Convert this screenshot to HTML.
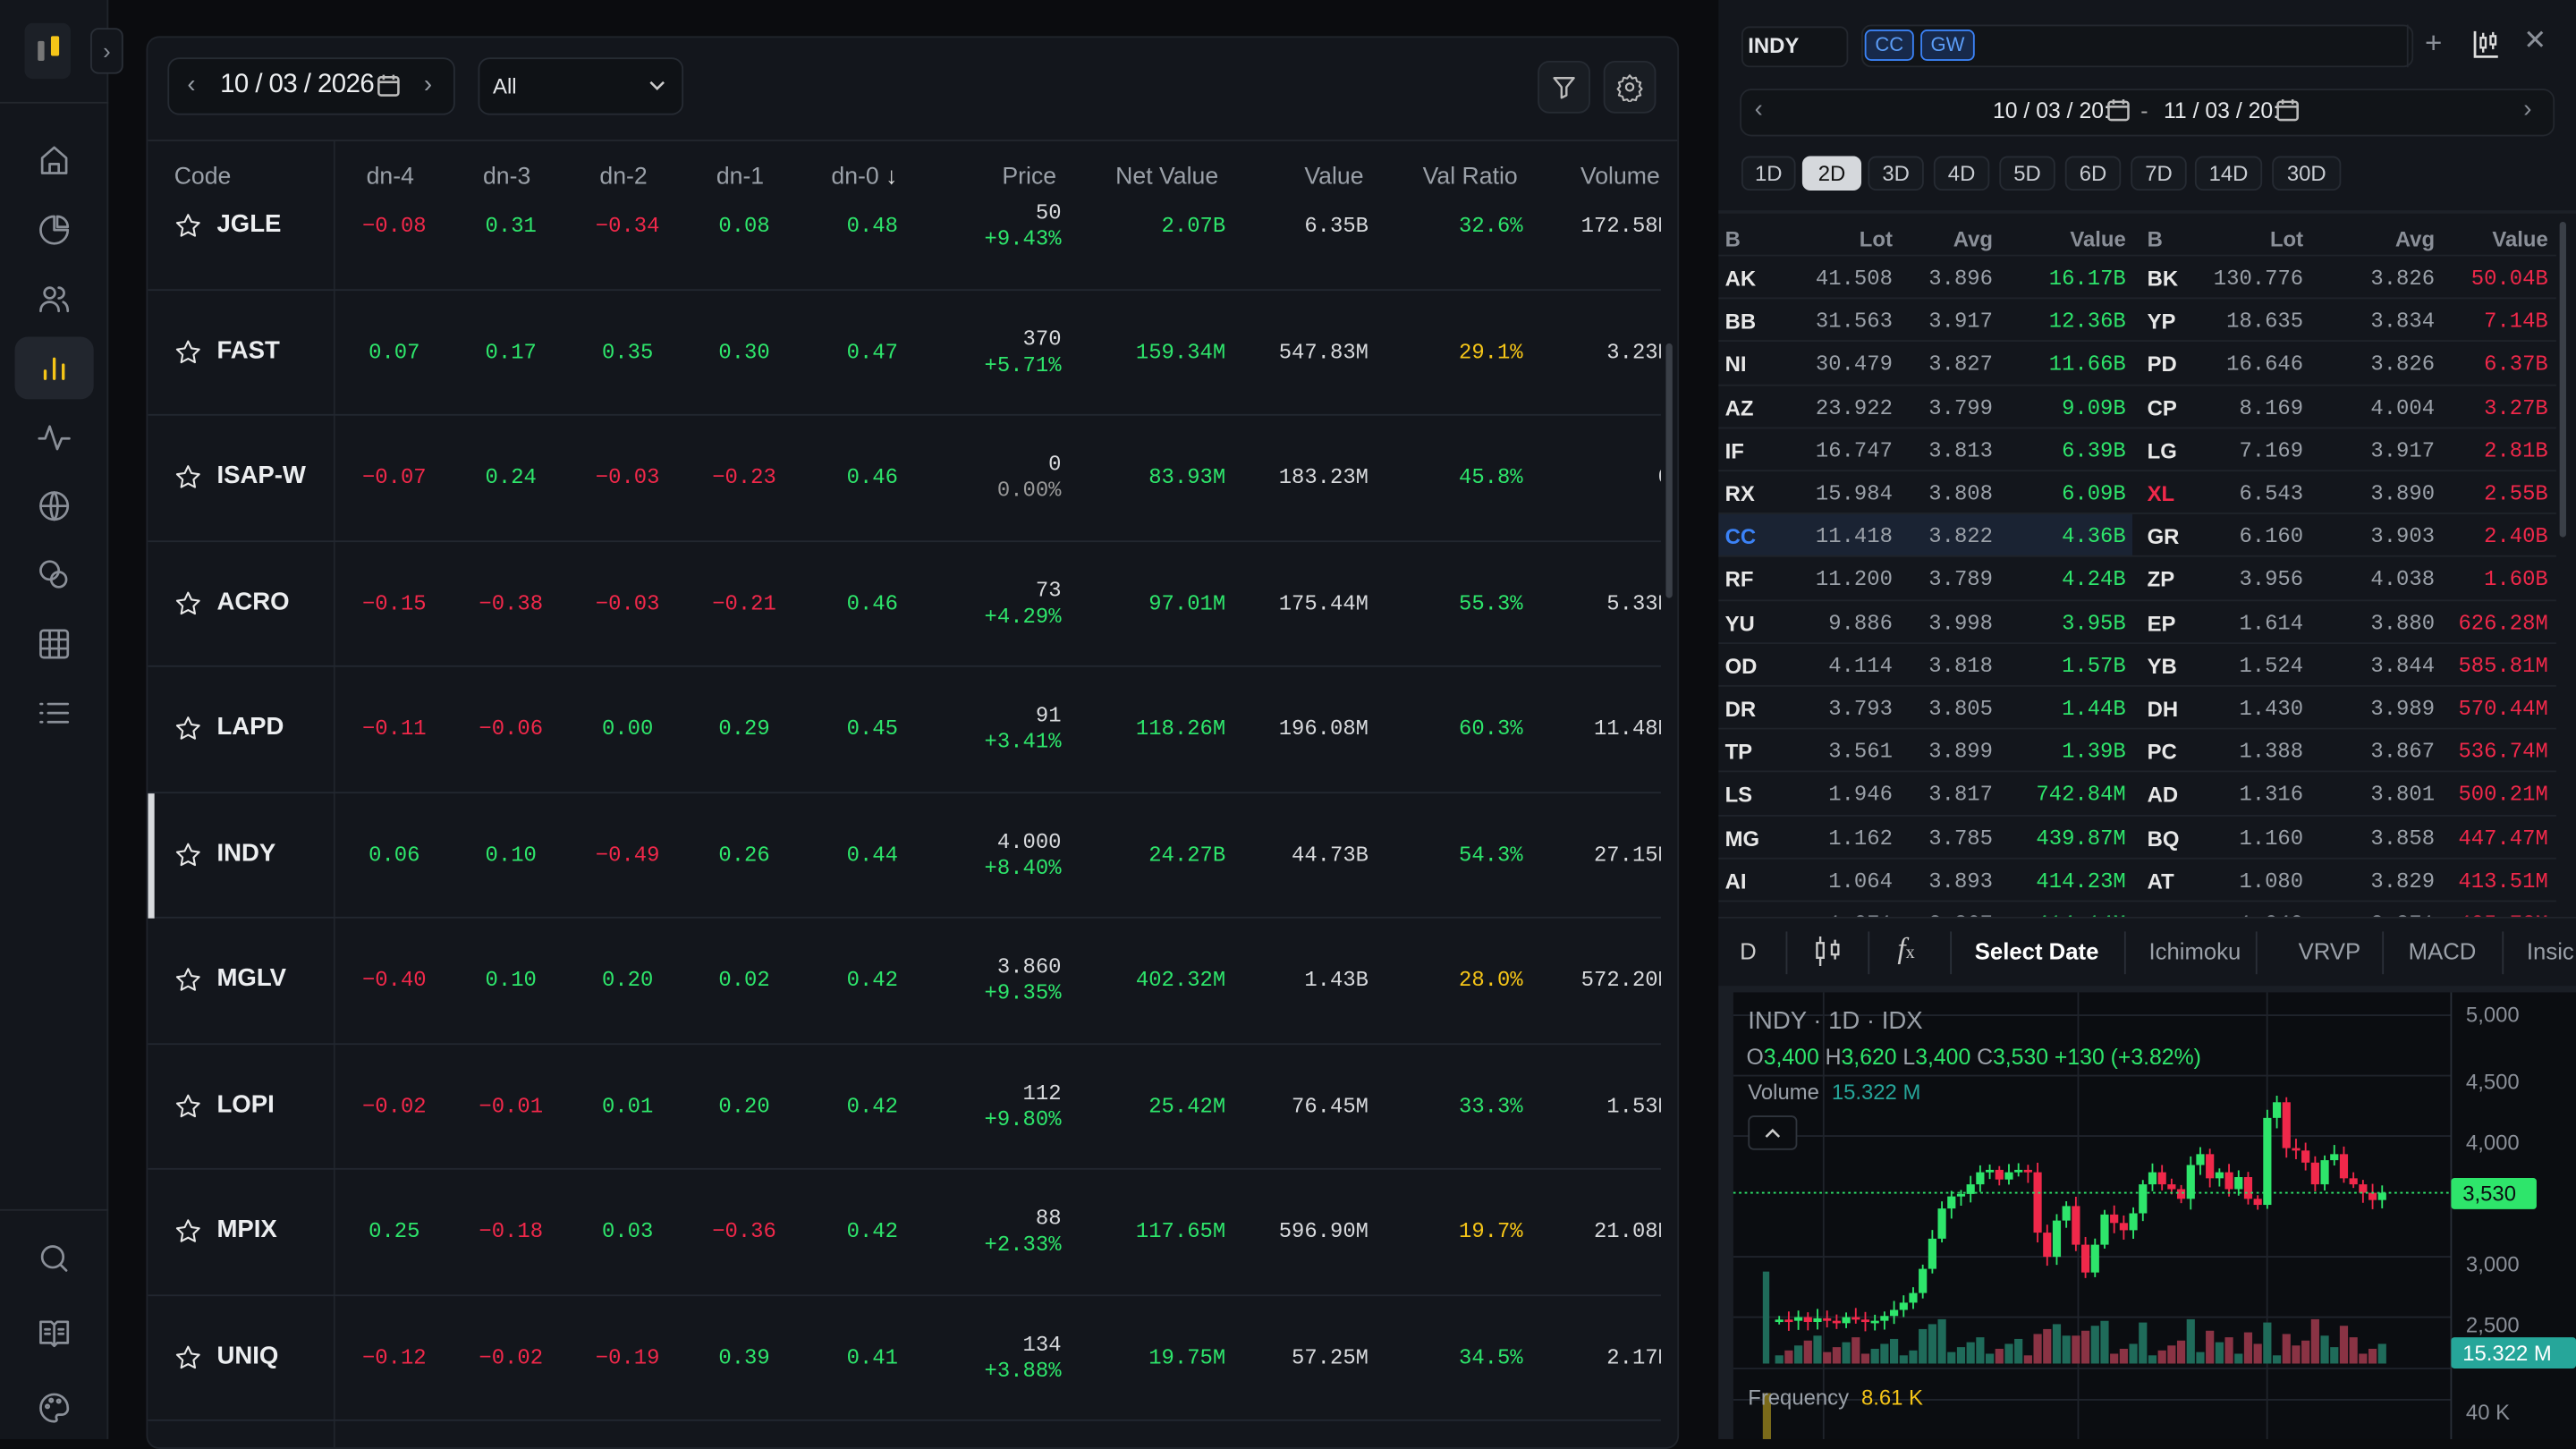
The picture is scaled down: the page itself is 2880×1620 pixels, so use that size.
<!DOCTYPE html>
<html><head><meta charset="utf-8"><style>
*{box-sizing:border-box;margin:0;padding:0}
html,body{width:2880px;height:1608px;overflow:hidden;background:#0b0c0f}
#w{position:absolute;left:0;top:0;width:1568px;height:876px;transform:scale(1.836735);transform-origin:0 0;font-family:"Liberation Sans",sans-serif;color:#e6e8eb}
.a{position:absolute}
.mono{font-family:"Liberation Mono","DejaVu Sans Mono",monospace}
.g{color:#2ee56b}.r{color:#f0284a}.y{color:#f5c518}.w{color:#d8dadd}
.ic{position:absolute;left:22px;width:22px;height:22px}
.ic svg{width:22px;height:22px;fill:none;stroke:#8a8f98;stroke-width:1.6;stroke-linecap:round;stroke-linejoin:round}
.hd{position:absolute;top:99px;font-size:14.5px;color:#9aa0a8}
.row{position:absolute;left:0;width:933px;height:76.5px;border-bottom:1.5px solid #222730}
.row .c{position:absolute;top:30px;font-size:13px;text-align:right}
.row .nm{position:absolute;left:42px;top:28px;font-weight:bold;font-size:15px;color:#eceef0}
.row svg{position:absolute;left:16px;top:29px;width:17px;height:17px;fill:none;stroke:#e8e8e8;stroke-width:1.6;stroke-linejoin:round}
.pb{position:absolute;top:95px;height:21px;border:1px solid #262b33;border-radius:5px;background:#161a20;font-size:13px;color:#c8ccd2;text-align:center;line-height:19px}
.bt{position:absolute;left:0;width:520px;height:26.2px;font-size:13px}
.bt span{position:absolute;top:6px}
.tb{position:absolute;top:571px;font-size:14px;color:#9aa0a8}
.sep{position:absolute;top:567px;width:1px;height:26px;background:#2a2f38}
</style></head><body><div id="w">
<!-- sidebar -->
<div class="a" style="left:0;top:0;width:66px;height:876px;background:#13161c;border-right:1px solid #20242b"></div>
<div class="a" style="left:0;top:62px;width:66px;height:1px;background:#23272e"></div>
<div class="a" style="left:0;top:736px;width:66px;height:1px;background:#23272e"></div>
<div class="a" style="left:15px;top:14px;width:28px;height:34px;background:#1c2027;border-radius:5px"></div>
<div class="a" style="left:23px;top:25px;width:4px;height:12px;background:#777;border-radius:1px"></div>
<div class="a" style="left:31px;top:22px;width:5px;height:12px;background:#f5c518;border-radius:1px"></div>
<div class="a" style="left:55px;top:17px;width:20px;height:28px;border:1px solid #2a2f37;border-radius:5px;background:#13161c;color:#8a8f98;font-size:14px;text-align:center;line-height:26px">›</div>
<div class="a" style="left:9px;top:205px;width:48px;height:38px;background:#22262e;border-radius:8px"></div>
<div class="ic" style="top:87px"><svg viewBox="0 0 24 24"><path d="M4 10l8-7 8 7v10H4z M9 20v-6h6v6"/></svg></div>
<div class="ic" style="top:129px"><svg viewBox="0 0 24 24"><path d="M12 3a9 9 0 1 0 9 9h-9z M14 3v7h7a7 7 0 0 0-7-7"/></svg></div>
<div class="ic" style="top:171px"><svg viewBox="0 0 24 24"><circle cx="9" cy="8" r="3.5"/><path d="M3 20c0-4 3-6 6-6s6 2 6 6 M15 4.5a3.5 3.5 0 0 1 0 7 M18 14c2 1 3 3 3 6"/></svg></div>
<div class="ic" style="top:213px"><svg viewBox="0 0 24 24" style="stroke:#f5c518;stroke-width:2"><path d="M6 19v-5 M12 19V6 M18 19v-9"/></svg></div>
<div class="ic" style="top:255px"><svg viewBox="0 0 24 24"><path d="M2 13h4l3-8 5 15 3-7h5"/></svg></div>
<div class="ic" style="top:297px"><svg viewBox="0 0 24 24"><circle cx="12" cy="12" r="9"/><path d="M3 12h18 M12 3c3 3 3 15 0 18 M12 3c-3 3-3 15 0 18"/></svg></div>
<div class="ic" style="top:339px"><svg viewBox="0 0 24 24"><circle cx="9" cy="9" r="6"/><circle cx="15" cy="15" r="5"/></svg></div>
<div class="ic" style="top:381px"><svg viewBox="0 0 24 24"><rect x="3" y="3" width="18" height="18" rx="2"/><path d="M3 9h18M3 15h18M9 3v18M15 3v18"/></svg></div>
<div class="ic" style="top:423px"><svg viewBox="0 0 24 24"><path d="M8 6h13M8 12h13M8 18h13M3 6h1M3 12h1M3 18h1"/></svg></div>
<div class="ic" style="top:755px"><svg viewBox="0 0 24 24"><circle cx="11" cy="11" r="7"/><path d="M16 16l4 4"/></svg></div>
<div class="ic" style="top:800px"><svg viewBox="0 0 24 24"><path d="M3 5h7l2 2 2-2h7v14h-7l-2 2-2-2H3z M12 7v14 M6 10h3M6 13h3M15 10h3M15 13h3"/></svg></div>
<div class="ic" style="top:846px"><svg viewBox="0 0 24 24"><path d="M12 3a9 9 0 0 0 0 18c1.5 0 2-1 1.5-2s0-2.5 1.5-2.5h2A4 4 0 0 0 21 12a9 9 0 0 0-9-9z"/><circle cx="7.5" cy="11" r="1"/><circle cx="10" cy="7" r="1"/><circle cx="15" cy="7.5" r="1"/></svg></div>

<!-- main panel -->
<div class="a" style="left:89px;top:22px;width:933px;height:860px;background:#13161c;border:1px solid #20242b;border-radius:8px;overflow:hidden">
 <div class="a" style="left:12px;top:12px;width:175px;height:35px;border:1px solid #262b33;border-radius:7px;background:#0f1216"></div>
 <div class="a" style="left:24px;top:20px;color:#9aa0a8;font-size:15px">‹</div>
 <div class="a" style="left:44px;top:20px;font-size:16px;color:#eceef0;letter-spacing:-0.3px">10 / 03 / 2026</div>
 <svg class="a" style="left:139px;top:21px" width="15" height="16" viewBox="0 0 15 16"><rect x="1.5" y="3" width="12" height="11" rx="1.5" fill="none" stroke="#bbb" stroke-width="1.4"/><path d="M1.5 6h12M4.5 1.5v3M10.5 1.5v3" stroke="#bbb" stroke-width="1.4"/></svg>
 <div class="a" style="left:168px;top:20px;color:#9aa0a8;font-size:15px">›</div>
 <div class="a" style="left:201px;top:12px;width:125px;height:35px;border:1px solid #262b33;border-radius:7px;background:#0f1216"></div>
 <div class="a" style="left:210px;top:22px;font-size:13px">All</div>
 <svg class="a" style="left:305px;top:25px" width="10" height="8"><path d="M1 2l4 4 4-4" fill="none" stroke="#ccc" stroke-width="1.4"/></svg>
 <div class="a" style="left:846px;top:14px;width:32px;height:32px;border:1px solid #262b33;border-radius:7px;background:#191d23"></div>
 <svg class="a" style="left:854px;top:22px" width="16" height="16" viewBox="0 0 16 16"><path d="M2 2.5h12l-4.5 5.5v5l-3 1.5v-6.5z" fill="none" stroke="#bbb" stroke-width="1.3" stroke-linejoin="round"/></svg>
 <div class="a" style="left:886px;top:14px;width:32px;height:32px;border:1px solid #262b33;border-radius:7px;background:#191d23"></div>
 <svg class="a" style="left:893px;top:21px" width="18" height="18" viewBox="0 0 24 24"><circle cx="12" cy="12" r="3" fill="none" stroke="#bbb" stroke-width="1.6"/><path d="M12 2.5l2 2.5 3-.7.8 3 3 1-1 3 2 2.2-2 2.2 1 3-3 1-.8 3-3-.7-2 2.5-2-2.5-3 .7-.8-3-3-1 1-3-2-2.2 2-2.2-1-3 3-1 .8-3 3 .7z" fill="none" stroke="#bbb" stroke-width="1.5" stroke-linejoin="round"/></svg>
 <div class="a" style="left:0;top:62px;width:933px;height:1px;background:#23272e"></div>
 <div class="a" style="left:113px;top:63px;width:1px;height:800px;background:#20242b"></div>
 <div class="hd" style="left:16px;top:77px">Code</div>
 <div class="hd" style="left:133px;top:77px">dn-4</div>
 <div class="hd" style="left:204px;top:77px">dn-3</div>
 <div class="hd" style="left:275px;top:77px">dn-2</div>
 <div class="hd" style="left:346px;top:77px">dn-1</div>
 <div class="hd" style="left:416px;top:77px">dn-0 <span style="color:#ddd">↓</span></div>
 <div class="hd" style="left:520px;top:77px">Price</div>
 <div class="hd" style="left:589px;top:77px">Net Value</div>
 <div class="hd" style="left:704px;top:77px">Value</div>
 <div class="hd" style="left:776px;top:77px">Val Ratio</div>
 <div class="hd" style="left:872px;top:77px">Volume</div>
 <div class="a" style="left:0;top:99px;width:921px;height:770px;overflow:hidden" id="body"></div>
 <div class="a" style="left:924px;top:186px;width:4px;height:155px;background:#3a3f47;border-radius:2px"></div>
</div>

<!-- right panel -->
<div class="a" style="left:1046px;top:0;width:522px;height:876px;background:#13161c"></div>
<div class="a" style="left:1060px;top:16px;width:65px;height:25px;border:1px solid #23272e;border-radius:5px;background:#111418"></div>
<div class="a" style="left:1064px;top:20px;font-weight:bold;font-size:13px">INDY</div>
<div class="a" style="left:1133px;top:15px;width:336px;height:26px;border:1px solid #23272e;border-radius:6px;background:#111418"></div>
<div class="a" style="left:1465px;top:15px;width:1px;height:26px;background:#23272e"></div>
<div class="a" style="left:1135px;top:18px;width:30px;height:19px;border:1.4px solid #3b82f6;border-radius:4px;background:#17294a;color:#5b9cf6;font-size:12px;text-align:center;line-height:17px">CC</div>
<div class="a" style="left:1169px;top:18px;width:33px;height:19px;border:1.4px solid #3b82f6;border-radius:4px;background:#17294a;color:#5b9cf6;font-size:12px;text-align:center;line-height:17px">GW</div>
<div class="a" style="left:1476px;top:16px;color:#8a8f98;font-size:18px">+</div>
<svg class="a" style="left:1505px;top:18px" width="17" height="18" viewBox="0 0 17 18"><path d="M1.5 1v15.5h14" fill="none" stroke="#ddd" stroke-width="1.5"/><rect x="5" y="5" width="3" height="6" fill="none" stroke="#ddd" stroke-width="1.3"/><rect x="11" y="4" width="3" height="5" fill="none" stroke="#ddd" stroke-width="1.3"/><path d="M6.5 2v3M6.5 11v3M12.5 1.5v2.5M12.5 9v3" stroke="#ddd" stroke-width="1.3"/></svg>
<div class="a" style="left:1536px;top:15px;color:#8a8f98;font-size:17px">✕</div>
<div class="a" style="left:1059px;top:54px;width:496px;height:29px;border:1px solid #23272e;border-radius:7px;background:#111418"></div>
<div class="a" style="left:1068px;top:58px;color:#8a8f98;font-size:15px">‹</div>
<div class="a" style="top:58px;color:#8a8f98;font-size:15px;left:1536px">›</div>
<div class="a" style="left:1213px;top:60px;font-size:13.5px">10 / 03 / 20:</div>
<svg class="a" style="left:1282px;top:59px" width="15" height="16" viewBox="0 0 15 16"><rect x="1.5" y="3" width="12" height="11" rx="1.5" fill="none" stroke="#bbb" stroke-width="1.4"/><path d="M1.5 6h12M4.5 1.5v3M10.5 1.5v3" stroke="#bbb" stroke-width="1.4"/></svg>
<div class="a" style="left:1303px;top:60px;font-size:13.5px;color:#aaa">-</div>
<div class="a" style="left:1317px;top:60px;font-size:13.5px">11 / 03 / 20:</div>
<svg class="a" style="left:1385px;top:59px" width="15" height="16" viewBox="0 0 15 16"><rect x="1.5" y="3" width="12" height="11" rx="1.5" fill="none" stroke="#bbb" stroke-width="1.4"/><path d="M1.5 6h12M4.5 1.5v3M10.5 1.5v3" stroke="#bbb" stroke-width="1.4"/></svg>
<div class="pb" style="left:1060px;width:33px">1D</div>
<div class="pb" style="left:1097px;width:36px;background:#d5d8dc;color:#111;border-color:#d5d8dc">2D</div>
<div class="pb" style="left:1137px;width:34px">3D</div>
<div class="pb" style="left:1177px;width:34px">4D</div>
<div class="pb" style="left:1217px;width:34px">5D</div>
<div class="pb" style="left:1257px;width:34px">6D</div>
<div class="pb" style="left:1297px;width:34px">7D</div>
<div class="pb" style="left:1336px;width:41px">14D</div>
<div class="pb" style="left:1383px;width:42px">30D</div>
<div class="a" style="left:1046px;top:128px;width:522px;height:2px;background:#1c2027"></div>
<div class="a" style="left:1046px;top:130px;width:510px;height:428px;overflow:hidden" id="bt">
 <div class="bt" style="top:2px;color:#8a8f98;font-weight:bold"><span style="left:4px">B</span><span style="right:414px">Lot</span><span style="right:353px">Avg</span><span style="right:272px">Value</span><span style="left:261px">B</span><span style="right:164px">Lot</span><span style="right:84px">Avg</span><span style="right:15px">Value</span></div>
</div>
<div class="a" style="left:1558px;top:135px;width:4px;height:192px;background:#3a3f47;border-radius:2px"></div>
<div class="a" style="left:1046px;top:558px;width:522px;height:42px;background:#13161c;border-top:1px solid #20242b"></div>
<div class="tb" style="left:1059px;color:#ccc">D</div>
<div class="sep" style="left:1087px"></div>
<svg class="a" style="left:1104px;top:569px" width="18" height="20" viewBox="0 0 18 20"><rect x="2" y="5" width="4" height="9" fill="none" stroke="#ccc" stroke-width="1.3"/><rect x="11" y="6" width="4" height="6" fill="none" stroke="#ccc" stroke-width="1.3"/><path d="M4 1v4M4 14v5M13 3v3M13 12v3" stroke="#ccc" stroke-width="1.3"/></svg>
<div class="sep" style="left:1137px"></div>
<div class="a" style="left:1155px;top:567px;font-family:'Liberation Serif',serif;font-style:italic;color:#ccc;font-size:18px">f<span style="font-size:11px;font-style:normal">x</span></div>
<div class="sep" style="left:1187px"></div>
<div class="tb" style="left:1202px;color:#fff;font-weight:bold">Select Date</div>
<div class="sep" style="left:1293px"></div>
<div class="tb" style="left:1308px">Ichimoku</div>
<div class="sep" style="left:1373px"></div>
<div class="tb" style="left:1399px">VRVP</div>
<div class="sep" style="left:1450px"></div>
<div class="tb" style="left:1466px">MACD</div>
<div class="sep" style="left:1523px"></div>
<div class="tb" style="left:1538px">Insic</div>
<div class="a" style="left:1046px;top:600px;width:522px;height:276px;background:#1a1e25"></div>
<svg class="a" style="left:1055px;top:604px" width="513" height="272" id="ch"></svg>
</div>
<script>
var rows=[
["JGLE","-0.08","0.31","-0.34","0.08","0.48","50","+9.43%","2.07B","6.35B","32.6%","172.58M",0],
["FAST","0.07","0.17","0.35","0.30","0.47","370","+5.71%","159.34M","547.83M","29.1%","3.23M",1],
["ISAP-W","-0.07","0.24","-0.03","-0.23","0.46","0","0.00%","83.93M","183.23M","45.8%","0",0],
["ACRO","-0.15","-0.38","-0.03","-0.21","0.46","73","+4.29%","97.01M","175.44M","55.3%","5.33M",0],
["LAPD","-0.11","-0.06","0.00","0.29","0.45","91","+3.41%","118.26M","196.08M","60.3%","11.48M",0],
["INDY","0.06","0.10","-0.49","0.26","0.44","4.000","+8.40%","24.27B","44.73B","54.3%","27.15M",0],
["MGLV","-0.40","0.10","0.20","0.02","0.42","3.860","+9.35%","402.32M","1.43B","28.0%","572.20M",1],
["LOPI","-0.02","-0.01","0.01","0.20","0.42","112","+9.80%","25.42M","76.45M","33.3%","1.53M",0],
["MPIX","0.25","-0.18","0.03","-0.36","0.42","88","+2.33%","117.65M","596.90M","19.7%","21.08M",1],
["UNIQ","-0.12","-0.02","-0.19","0.39","0.41","134","+3.88%","19.75M","57.25M","34.5%","2.17M",0]];
var h="";var cx=[150,221,292,363,441];
rows.forEach(function(r,i){var t=i*76.5-22;
h+='<div class="row" style="top:'+t+'px">'+(r[0]=="INDY"?'<div style="position:absolute;left:0;top:0;width:4px;height:76px;background:#d8dadd"></div>':'')+
'<svg viewBox="0 0 24 24"><path d="M12 2.5l2.9 6 6.6.9-4.8 4.6 1.2 6.5L12 17.4 6.1 20.5l1.2-6.5L2.5 9.4l6.6-.9z"/></svg><div class="nm">'+r[0]+'</div>';
for(var k=0;k<5;k++){var v=r[1+k];h+='<div class="c mono '+(v[0]=="-"?"r":"g")+'" style="left:'+(cx[k]-30)+'px;width:60px;text-align:center">'+v.replace("-","−")+'</div>';}
var pc=r[7]=="0.00%"?"w":"g";
h+='<div class="c mono w" style="right:377px;top:22px">'+r[6]+'</div><div class="c mono '+pc+'" style="right:377px;top:38px;'+(pc=="w"?"color:#999":"")+'">'+r[7]+'</div>';
h+='<div class="c mono g" style="right:277px">'+r[8]+'</div><div class="c mono w" style="right:190px">'+r[9]+'</div>';
h+='<div class="c mono '+(r[12]?"y":"g")+'" style="right:96px">'+r[10]+'</div><div class="c mono w" style="right:6px">'+r[11]+'</div></div>';});
document.getElementById("body").innerHTML=h;
var b=[["AK","41.508","3.896","16.17B","BK","130.776","3.826","50.04B"],["BB","31.563","3.917","12.36B","YP","18.635","3.834","7.14B"],["NI","30.479","3.827","11.66B","PD","16.646","3.826","6.37B"],["AZ","23.922","3.799","9.09B","CP","8.169","4.004","3.27B"],["IF","16.747","3.813","6.39B","LG","7.169","3.917","2.81B"],["RX","15.984","3.808","6.09B","XL","6.543","3.890","2.55B"],["CC","11.418","3.822","4.36B","GR","6.160","3.903","2.40B"],["RF","11.200","3.789","4.24B","ZP","3.956","4.038","1.60B"],["YU","9.886","3.998","3.95B","EP","1.614","3.880","626.28M"],["OD","4.114","3.818","1.57B","YB","1.524","3.844","585.81M"],["DR","3.793","3.805","1.44B","DH","1.430","3.989","570.44M"],["TP","3.561","3.899","1.39B","PC","1.388","3.867","536.74M"],["LS","1.946","3.817","742.84M","AD","1.316","3.801","500.21M"],["MG","1.162","3.785","439.87M","BQ","1.160","3.858","447.47M"],["AI","1.064","3.893","414.23M","AT","1.080","3.829","413.51M"],["UR","1.071","3.867","414.14M","XA","1.040","3.871","405.73M"]];
var s="";b.forEach(function(r,i){var t=25+i*26.2;
s+='<div class="bt" style="top:'+t+'px;border-top:1.5px solid #1f232a">'+(r[0]=="CC"?'<div style="position:absolute;left:0;top:0;width:252px;height:26px;background:#1a2333"></div>':'')+
'<span style="left:4px;font-weight:bold;'+(r[0]=="CC"?'color:#3b82f6':'color:#e8e8e8')+'">'+r[0]+'</span><span class="mono" style="right:414px;color:#9aa0a8">'+r[1]+'</span><span class="mono" style="right:353px;color:#9aa0a8">'+r[2]+'</span><span class="mono g" style="right:272px">'+r[3]+'</span>'+
'<span style="left:261px;font-weight:bold;'+(r[4]=="XL"?'color:#f0284a':'color:#e8e8e8')+'">'+r[4]+'</span><span class="mono" style="right:164px;color:#9aa0a8">'+r[5]+'</span><span class="mono" style="right:84px;color:#9aa0a8">'+r[6]+'</span><span class="mono r" style="right:15px">'+r[7]+'</span></div>';});
document.getElementById("bt").innerHTML+=s;
// chart
var c='<rect width="513" height="272" fill="#0b0d11"/>';
var X0=1055,Y0=604;function Y(p){return 618+(5000-p)*0.0735-Y0;}
[5000,4500,4000,3000,2500].forEach(function(p){c+='<line x1="0" x2="437" y1="'+Y(p)+'" y2="'+Y(p)+'" stroke="#1f232b"/>';});
c+='<line x1="0" x2="437" y1="229" y2="229" stroke="#1f232b"/><line x1="0" x2="437" y1="248" y2="248" stroke="#1f232b"/>';
[1110,1265,1380].forEach(function(x){c+='<line x1="'+(x-X0)+'" x2="'+(x-X0)+'" y1="0" y2="272" stroke="#1f232b"/>';});
c+='<line x1="437" x2="437" y1="0" y2="272" stroke="#2a2f38"/>';
var cl=[2480,2470,2500,2460,2490,2470,2450,2500,2480,2470,2470,2510,2560,2620,2700,2900,3150,3400,3500,3520,3600,3700,3720,3640,3700,3720,3700,3200,3000,3300,3420,3100,2870,3100,3350,3280,3220,3360,3600,3700,3600,3560,3480,3760,3850,3650,3700,3560,3660,3480,3430,4150,4280,3900,3880,3780,3600,3800,3850,3650,3600,3530,3470,3530];
var n=cl.length,dx=(1450-1083)/(n-1),prev=2470;
for(var i=0;i<n;i++){var x=1083+i*dx-X0,o=prev,cc=cl[i],up=cc>=o,col=up?"#2ee56b":"#f0284a";
var hi=Math.max(o,cc)+30+(i*37%50),lo=Math.min(o,cc)-30-(i*53%60);
c+='<line x1="'+x+'" x2="'+x+'" y1="'+Y(hi)+'" y2="'+Y(lo)+'" stroke="'+col+'"/>';
var yt=Y(Math.max(o,cc)),hh=Math.max(1.5,Y(Math.min(o,cc))-yt);c+='<rect x="'+(x-2.5)+'" y="'+yt+'" width="5" height="'+hh+'" fill="'+col+'"/>';
var vh=5+(i*29%13)+(Math.abs(cc-o)>150?10:0);c+='<rect x="'+(x-2.5)+'" y="'+(226-vh)+'" width="5" height="'+vh+'" fill="'+(up?"#1f6b5a":"#8a3344")+'"/>';prev=cc;}
c+='<rect x="18" y="170" width="4" height="56" fill="#1f6b5a"/>';
c+='<line x1="0" x2="437" y1="'+Y(3530)+'" y2="'+Y(3530)+'" stroke="#2ee56b" stroke-dasharray="1.5 2"/>';
c+='<rect x="18" y="244" width="5" height="28" fill="#7a6a1a"/>';
c+='<text x="9" y="22" fill="#9aa0a8" font-size="15" font-family="Liberation Sans">INDY · 1D · IDX</text>';
c+='<text x="8" y="44" font-size="13.5" font-family="Liberation Sans" fill="#9aa0a8">O<tspan fill="#2ee56b">3,400</tspan> H<tspan fill="#2ee56b">3,620</tspan> L<tspan fill="#2ee56b">3,400</tspan> C<tspan fill="#2ee56b">3,530 +130 (+3.82%)</tspan></text>';
c+='<text x="9" y="65" font-size="13" font-family="Liberation Sans" fill="#9aa0a8">Volume <tspan fill="#26a69a" dx="4">15.322 M</tspan></text>';
c+='<rect x="9.5" y="75.5" width="29" height="20" rx="3" fill="#0b0d11" stroke="#2f343c"/><path d="M20 88l4-4 4 4" fill="none" stroke="#ccc" stroke-width="1.4"/>';
c+='<text x="9" y="251" font-size="13" font-family="Liberation Sans" fill="#9aa0a8">Frequency <tspan fill="#f5c518" dx="4">8.61 K</tspan></text>';
[["5,000",618],["4,500",659],["4,000",696],["3,000",770],["2,500",807],["40 K",860]].forEach(function(a){c+='<text x="446" y="'+(a[1]-Y0+4)+'" font-size="13" font-family="Liberation Sans" fill="#8a8f98">'+a[0]+'</text>';});
c+='<rect x="437" y="'+(Y(3530)-9)+'" width="52" height="19" rx="2" fill="#2ee56b"/><text x="444" y="'+(Y(3530)+5)+'" font-size="13" font-family="Liberation Sans" fill="#0b0d11">3,530</text>';
c+='<rect x="437" y="210" width="76" height="19" rx="2" fill="#26a69a"/><text x="444" y="224" font-size="13" font-family="Liberation Sans" fill="#fff">15.322 M</text>';
document.getElementById("ch").innerHTML=c;
</script>
</body></html>
